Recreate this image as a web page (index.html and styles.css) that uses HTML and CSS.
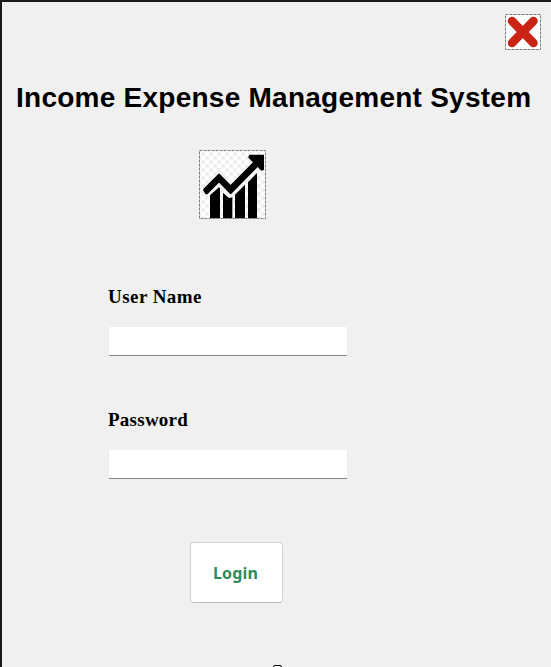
FILE: index.html
```
<!DOCTYPE html>
<html lang="en">
<head>
<meta charset="utf-8">
<title>Income Expense Management System</title>
<link rel="stylesheet" href="styles.css">
</head>
<body>
<main class="window">
  <button class="close" type="button" aria-label="Close">
    <svg viewBox="0 0 36 36" width="36" height="36">
      <rect x="0.5" y="0.5" width="35" height="35" fill="#fff" stroke="#7d7d7d" stroke-dasharray="3 1"/>
      <path d="M7 7L28.5 29M28.5 7L7 29" stroke="#cc2414" stroke-width="8.6" stroke-linecap="round"/>
    </svg>
  </button>
  <h1 class="title">Income Expense Management System</h1>
  <svg class="logo" viewBox="27 24 201 207" width="67" height="69">
    <defs>
      <pattern id="checks" x="33" y="30" width="24" height="24" patternUnits="userSpaceOnUse">
        <path d="M0 0h12v12H0zM12 12h12v12H12z" fill="#f1f1f1"/>
      </pattern>
    </defs>
    <path d="M27 24h201v207H27z" fill="#fff"/>
    <path d="M27 24h201v207H27z" fill="url(#checks)"/>
    <path d="M60 160L87 136L90 139V229H60zM99 152L113 165Q120 171 127 165V229H99zM135 158L165 128V229H135zM174 121L201 93V229H174z"/>
    <path d="M46 149L87 108L122 143L202 62" fill="none" stroke="#000" stroke-width="20"/>
    <path d="M39 145L48 158L54 155L50 137zM180 38H222V84L214 86L175 47Q175 40 180 38z"/>
    <rect x="28.5" y="25.5" width="198" height="204" fill="none" stroke="#7d7d7d" stroke-width="3" stroke-dasharray="9 3"/>
  </svg>
  <form class="form">
    <label class="label label-user" for="user">User Name</label>
    <input class="field" id="user" type="text">
    <label class="label" for="pass">Password</label>
    <input class="field" id="pass" type="password">
    <button class="login" type="button">Login</button>
  </form>
  <span class="handle"></span>
</main>
</body>
</html>
```
FILE: styles.css
```
* { box-sizing: border-box; }
body { margin: 0; }
.window {
  position: relative;
  display: flex;
  flex-direction: column;
  height: 667px;
  overflow: hidden;
  padding-top: 12px;
  background: #f0f0f0;
  border: solid #1b191a;
  border-width: 2px 0 0 2px;
}
.close {
  align-self: flex-end;
  width: 36px;
  height: 36px;
  margin-right: 10px;
  padding: 0;
  border: 0;
  background: none;
}
.close svg, .logo { display: block; }
.title {
  margin: 32px 0 0 14px;
  font: bold 28px/32px "Liberation Sans", Arial, sans-serif;
  letter-spacing: 0.25px;
  white-space: nowrap;
  color: #000;
}
.logo { margin: 36px 0 0 197px; }
.form {
  display: flex;
  flex-direction: column;
  width: 240px;
  margin: 67px 0 0 106px;
}
.label {
  height: 22px;
  margin-bottom: 19px;
  font: bold 19px/22px "Liberation Serif", "Times New Roman", serif;
  letter-spacing: 0.25px;
  color: #000;
}
.label-user { letter-spacing: 0.45px; }
.field {
  width: 240px;
  height: 29px;
  margin: 0 0 53px;
  padding: 0 6px;
  border: 1px solid #ececec;
  border-top-width: 0;
  border-bottom-color: #858585;
  border-radius: 2px;
  background: #fff;
  outline: 0;
}
.login {
  width: 93px;
  height: 61px;
  margin: 10px 0 0 82px;
  padding: 0 2px 0 0;
  border: 1px solid #d0d0d0;
  border-bottom-color: #bcbcbc;
  border-radius: 4px;
  background: #fff;
  color: #2e8b57;
  font: bold 16px/22px "Noto Sans", sans-serif;
  letter-spacing: 0.2px;
}
.handle {
  position: absolute;
  left: 271px;
  bottom: -7px;
  width: 9px;
  height: 9px;
  border: 1px solid #000;
  border-radius: 2px;
  background: #fff;
}
```
